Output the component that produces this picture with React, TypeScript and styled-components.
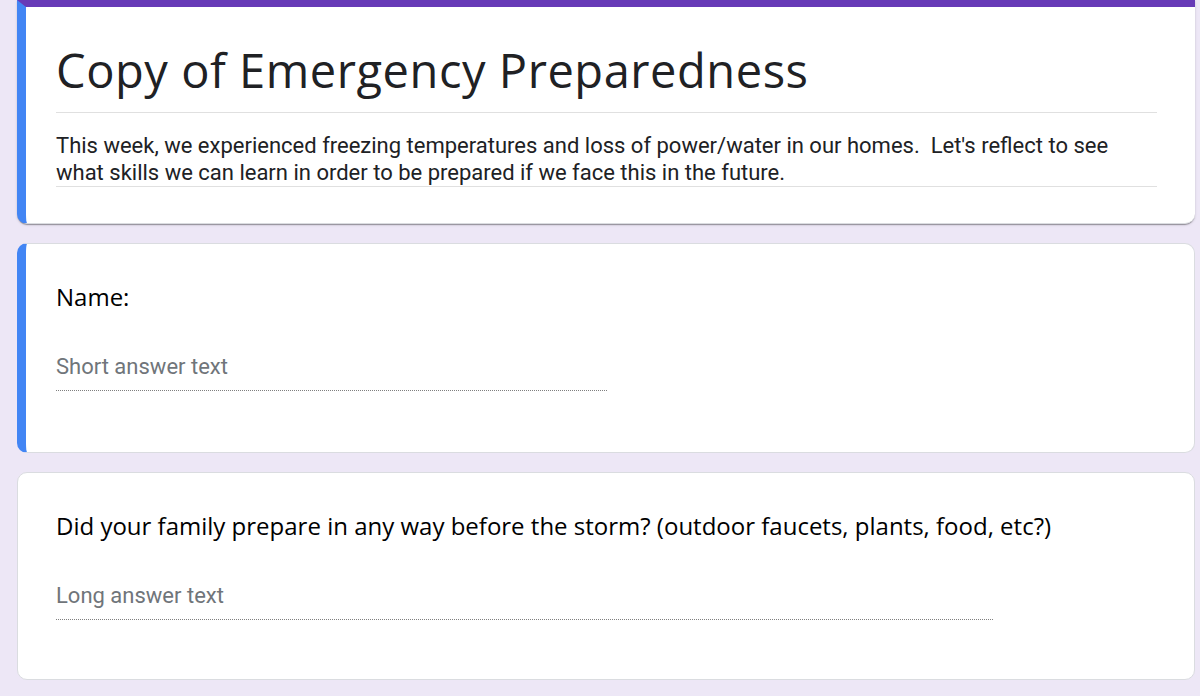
import * as React from "react";
import styled, { createGlobalStyle } from "styled-components";

const GlobalStyle = createGlobalStyle`
    html, body {
        margin: 0;
        padding: 0;
        background: #ede7f6;
    }
`;

const Page = styled.div`
    box-sizing: border-box;
    min-height: 696px;
    padding: 0 5px 16px 17px;
    display: flex;
    flex-direction: column;
    gap: 19px;
    background: #ede7f6;
`;

const Card = styled.div<{ $accent?: boolean; $header?: boolean }>`
    box-sizing: border-box;
    width: 1178px;
    background: #fff;
    border: 1px solid #dadce0;
    border-left: ${p => (p.$accent ? "9px solid #4285f4" : "1px solid #dadce0")};
    border-radius: ${p => (p.$header ? "0 0 10px 10px" : "10px")};
    padding: 37px 38px ${p => (p.$accent ? "61px" : "59px")} ${p => (p.$accent ? "30px" : "38px")};
    ${p => p.$header && `
        border-top: 7px solid #673ab7;
        border-right: none;
        padding-top: 35px;
        padding-bottom: 36px;
        box-shadow: 0 2px 1px -1px rgba(0,0,0,.2), 0 1px 1px 0 rgba(0,0,0,.14), 0 1px 3px 0 rgba(0,0,0,.12);
    `}
`;

const Title = styled.h1`
    margin: 0;
    padding-bottom: 14px;
    border-bottom: 1px solid #e0e0e0;
    font-family: "Open Sans", sans-serif;
    font-weight: 400;
    font-size: 47px;
    letter-spacing: 0.55px;
    line-height: 56px;
    color: #202124;
`;

const Description = styled.p`
    margin: 19px 0 0;
    border-bottom: 1px solid #e0e0e0;
    font-family: Roboto, sans-serif;
    font-size: 22px;
    line-height: 27px;
    color: #202124;
    white-space: pre-wrap;
`;

const Question = styled.div`
    font-family: "Open Sans", sans-serif;
    font-size: 24px;
    line-height: 32px;
    color: #000;
`;

const Answer = styled.div<{ $width: number }>`
    width: ${p => p.$width}px;
    margin-top: 40px;
    padding-bottom: 9px;
    border-bottom: 1px dotted rgba(0, 0, 0, 0.5);
    font-family: Roboto, sans-serif;
    font-size: 22px;
    line-height: 28px;
    color: #70757a;
`;

const questions = [
    { text: "Name:", placeholder: "Short answer text", width: 551, accent: true },
    {
        text: "Did your family prepare in any way before the storm? (outdoor faucets, plants, food, etc?)",
        placeholder: "Long answer text",
        width: 937,
        accent: false,
    },
];

export default function App() {
    return <>
        <GlobalStyle />
        <Page>
            <Card $header $accent>
                <Title>Copy of Emergency Preparedness</Title>
                <Description>{"This week, we experienced freezing temperatures and loss of power/water in our homes.  Let's reflect to see\nwhat skills we can learn in order to be prepared if we face this in the future."}</Description>
            </Card>
            {questions.map(q => (
                <Card key={q.text} $accent={q.accent}>
                    <Question>{q.text}</Question>
                    <Answer $width={q.width}>{q.placeholder}</Answer>
                </Card>
            ))}
        </Page>
    </>;
}
